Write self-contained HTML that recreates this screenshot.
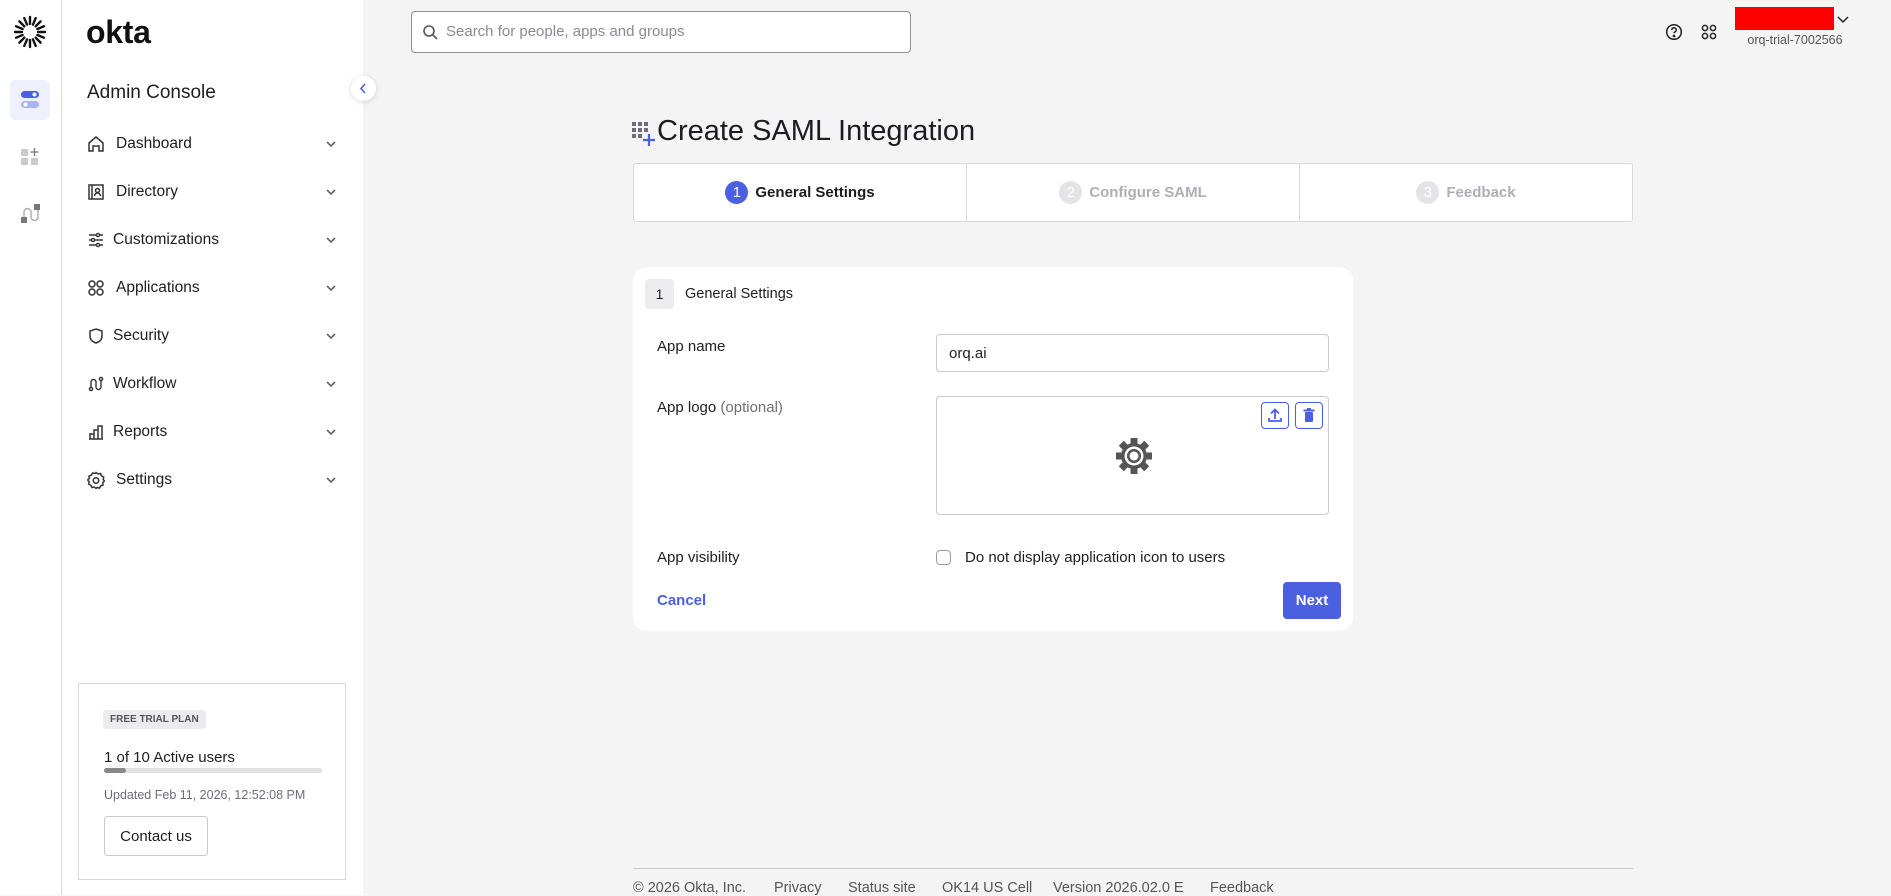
<!DOCTYPE html>
<html><head><meta charset="utf-8"><style>
*{box-sizing:border-box;margin:0;padding:0}
body{width:1891px;height:895px;overflow:hidden;background:#f4f4f4;font-family:"Liberation Sans",sans-serif;color:#1d1d21;position:relative;font-size:15px}
.abs{position:absolute}
.rail{left:0;top:0;width:62px;height:895px;background:#fff;border-right:1px solid #e1e1e1}
.side{left:63px;top:0;width:300px;height:895px;background:#fff}
.nav{position:absolute;left:0;width:300px;height:30px;display:flex;align-items:center;font-size:15.5px;color:#1d1d21}
.nav svg.ic{position:absolute;left:24px}
.nav span{position:absolute;left:53px}
.nav svg.ch{position:absolute;left:261px}
.steps{left:633px;top:163px;width:1000px;height:59px;background:#fff;border:1px solid #d7d7dc;border-radius:3px;display:flex}
.step{flex:1;display:flex;align-items:center;justify-content:center;font-size:15px;font-weight:bold;color:#aeaeb5;border-right:1px solid #d7d7dc}
.step:last-child{border-right:none}
.num{width:23px;height:23px;border-radius:50%;background:#e4e4e7;color:#fff;font-weight:normal;display:inline-flex;align-items:center;justify-content:center;margin-right:7px;font-size:15px}
.card{left:633px;top:267px;width:720px;height:364px;background:#fff;border-radius:14px}
.lbl{font-size:15px;color:#1d1d21}
.ft{top:880px;font-size:14.5px;color:#555;white-space:nowrap}
</style></head><body>
<div class="abs rail">
 <svg class="abs" style="left:13px;top:15px" width="34" height="34" viewBox="-17 -17 34 34">
  <g stroke="#111" stroke-width="2.4" stroke-linecap="round">
   <line x1="0" y1="-8" x2="0" y2="-15"/><line x1="0" y1="8" x2="0" y2="15"/><line x1="-8" y1="0" x2="-15" y2="0"/><line x1="8" y1="0" x2="15" y2="0"/>
   <line x1="5.7" y1="-5.7" x2="10.6" y2="-10.6"/><line x1="-5.7" y1="5.7" x2="-10.6" y2="10.6"/><line x1="-5.7" y1="-5.7" x2="-10.6" y2="-10.6"/><line x1="5.7" y1="5.7" x2="10.6" y2="10.6"/>
   <line x1="3" y1="-7.4" x2="5.7" y2="-13.9"/><line x1="-3" y1="7.4" x2="-5.7" y2="13.9"/><line x1="-3" y1="-7.4" x2="-5.7" y2="-13.9"/><line x1="3" y1="7.4" x2="5.7" y2="13.9"/>
   <line x1="7.4" y1="-3" x2="13.9" y2="-5.7"/><line x1="-7.4" y1="3" x2="-13.9" y2="5.7"/><line x1="-7.4" y1="-3" x2="-13.9" y2="-5.7"/><line x1="7.4" y1="3" x2="13.9" y2="5.7"/>
  </g></svg>
 <div class="abs" style="left:10px;top:80px;width:40px;height:40px;background:#eef0fd;border-radius:5px"></div>
 <svg class="abs" style="left:20px;top:90px" width="20" height="20"><rect x="1" y="1" width="18" height="7" rx="3.5" fill="#4b5fe1"/><circle cx="14.5" cy="4.5" r="2" fill="#fff"/><rect x="1" y="11" width="18" height="7" rx="3.5" fill="#a9b4f2"/><circle cx="5.5" cy="14.5" r="2" fill="#fff"/></svg>
 <svg class="abs" style="left:20px;top:147px" width="20" height="20"><rect x="1" y="2" width="7" height="7" rx="1" fill="#c9c9ce"/><rect x="1" y="11" width="7" height="7" rx="1" fill="#c9c9ce"/><rect x="11" y="11" width="7" height="7" rx="1" fill="#c9c9ce"/><path d="M14.5 1v8M10.5 5h8" stroke="#888" stroke-width="1.6"/></svg>
 <svg class="abs" style="left:20px;top:203px" width="22" height="22"><rect x="1" y="14" width="6" height="6" fill="#777"/><rect x="14" y="1" width="6" height="6" fill="#777"/><path d="M4 14V9a3.5 3.5 0 0 1 7 0v5a3.5 3.5 0 0 0 7 0V7" fill="none" stroke="#aaa" stroke-width="1.4"/></svg>
</div>
<div class="abs side">
 <div class="abs" style="left:23px;top:14px;font-size:32px;font-weight:bold;letter-spacing:-0.3px;color:#111">okta</div>
 <div class="abs" style="left:24px;top:82px;font-size:19px">Admin Console</div>
 <div class="nav" style="top:129px"><svg class="ic" width="18" height="18" fill="none" stroke="#333" stroke-width="1.5"><path d="M2 16V8l7-6 7 6v8h-4v-5H6v5z"/></svg><span>Dashboard</span><svg class="ch" width="14" height="14" fill="none" stroke="#555" stroke-width="1.5"><path d="M3 5l4 4 4-4"/></svg></div>
 <div class="nav" style="top:177px"><svg class="ic" width="18" height="18" fill="none" stroke="#333" stroke-width="1.5"><rect x="2" y="2" width="14" height="14"/><path d="M5 2v14"/><circle cx="10.5" cy="7.5" r="2"/><path d="M7.5 13a3 3 0 0 1 6 0"/></svg><span>Directory</span><svg class="ch" width="14" height="14" fill="none" stroke="#555" stroke-width="1.5"><path d="M3 5l4 4 4-4"/></svg></div>
 <div class="nav" style="top:225px"><svg class="ic" width="18" height="18" fill="none" stroke="#333" stroke-width="1.4"><path d="M2 4h14M2 9h14M2 14h14"/><circle cx="11" cy="4" r="1.6" fill="#fff"/><circle cx="6" cy="9" r="1.6" fill="#fff"/><circle cx="11" cy="14" r="1.6" fill="#fff"/></svg><span style="left:50px">Customizations</span><svg class="ch" width="14" height="14" fill="none" stroke="#555" stroke-width="1.5"><path d="M3 5l4 4 4-4"/></svg></div>
 <div class="nav" style="top:273px"><svg class="ic" width="18" height="18" fill="none" stroke="#333" stroke-width="1.5"><circle cx="5" cy="5" r="3"/><circle cx="13" cy="5" r="3"/><circle cx="5" cy="13" r="3"/><circle cx="13" cy="13" r="3"/></svg><span>Applications</span><svg class="ch" width="14" height="14" fill="none" stroke="#555" stroke-width="1.5"><path d="M3 5l4 4 4-4"/></svg></div>
 <div class="nav" style="top:321px"><svg class="ic" width="18" height="18" fill="none" stroke="#333" stroke-width="1.5"><path d="M9 2l6 2v5c0 4-3 6-6 7-3-1-6-3-6-7V4z"/></svg><span style="left:50px">Security</span><svg class="ch" width="14" height="14" fill="none" stroke="#555" stroke-width="1.5"><path d="M3 5l4 4 4-4"/></svg></div>
 <div class="nav" style="top:369px"><svg class="ic" width="18" height="18" fill="none" stroke="#333" stroke-width="1.4"><circle cx="4" cy="14" r="1.6"/><circle cx="14" cy="4" r="1.6"/><path d="M4 12V7a2.5 2.5 0 0 1 5 0v5a2.5 2.5 0 0 0 5 0V6"/></svg><span style="left:50px">Workflow</span><svg class="ch" width="14" height="14" fill="none" stroke="#555" stroke-width="1.5"><path d="M3 5l4 4 4-4"/></svg></div>
 <div class="nav" style="top:417px"><svg class="ic" width="18" height="18" fill="none" stroke="#333" stroke-width="1.5"><path d="M2 16h14M3 16v-5h4v5M7 16V7h4v9M11 16V3h4v13"/></svg><span style="left:50px">Reports</span><svg class="ch" width="14" height="14" fill="none" stroke="#555" stroke-width="1.5"><path d="M3 5l4 4 4-4"/></svg></div>
 <div class="nav" style="top:465px"><svg class="ic" width="18" height="18" fill="none" stroke="#333" stroke-width="1.5"><path d="M9 1.5l2 1.5 2.5-.5 1 2.3 2.2 1.2-.5 2.5L17.5 10l-1.8 1.6.3 2.5-2.3.8-1.2 2.2-2.5-.6L9 17.5 7.4 16l-2.5.5-1-2.3-2.2-1.2.5-2.5L.5 9l1.8-1.6L2 5l2.3-.8L5.5 2l2.5.6z"/><circle cx="9" cy="9.5" r="2.7"/></svg><span>Settings</span><svg class="ch" width="14" height="14" fill="none" stroke="#555" stroke-width="1.5"><path d="M3 5l4 4 4-4"/></svg></div>
 <div class="abs" style="left:15px;top:683px;width:268px;height:197px;border:1px solid #d7d7dc">
  <div class="abs" style="left:24px;top:26px;background:#ececee;border-radius:3px;padding:4px 7px;font-size:10px;font-weight:bold;color:#555">FREE TRIAL PLAN</div>
  <div class="abs" style="left:25px;top:65px;font-size:15px">1 of 10 Active users</div>
  <div class="abs" style="left:25px;top:84px;width:218px;height:5px;background:#e1e1e4;border-radius:3px"><div style="width:22px;height:5px;background:#888;border-radius:3px"></div></div>
  <div class="abs" style="left:25px;top:104px;font-size:12.5px;color:#6e6e78">Updated Feb 11, 2026, 12:52:08 PM</div>
  <div class="abs" style="left:25px;top:132px;width:104px;height:40px;border:1px solid #c9c9ce;border-radius:4px;display:flex;align-items:center;justify-content:center;font-size:15px">Contact us</div>
 </div>
</div>
<div class="abs" style="left:351px;top:76px;width:25px;height:25px;border-radius:50%;background:#fff;box-shadow:0 1px 6px rgba(0,0,0,.15)"><svg width="25" height="25" fill="none" stroke="#4b5fe1" stroke-width="1.6"><path d="M14 8l-4 4.5 4 4.5"/></svg></div>

<div class="abs" style="left:411px;top:11px;width:500px;height:42px;background:#fff;border:1px solid #8f8f96;border-radius:4px">
 <svg class="abs" style="left:10px;top:12px" width="17" height="17" fill="none" stroke="#555" stroke-width="1.6"><circle cx="7" cy="7" r="5"/><path d="M11 11l4 4"/></svg>
 <div class="abs" style="left:34px;top:11px;font-size:15px;color:#8a8a93">Search for people, apps and groups</div>
</div>
<svg class="abs" style="left:1665px;top:23px" width="18" height="18" fill="none" stroke="#222" stroke-width="1.5"><circle cx="9" cy="9" r="7.3"/><path d="M6.8 7a2.2 2.2 0 1 1 3 2c-.6.3-.8.7-.8 1.3"/><circle cx="9" cy="13" r=".6" fill="#222"/></svg>
<svg class="abs" style="left:1700px;top:23px" width="18" height="18" fill="none" stroke="#222" stroke-width="1.5"><circle cx="5" cy="5" r="2.6"/><circle cx="13" cy="5" r="2.6"/><circle cx="5" cy="13" r="2.6"/><circle cx="13" cy="13" r="2.6"/></svg>
<div class="abs" style="left:1735px;top:7px;width:99px;height:23px;background:#ff0000"></div>
<svg class="abs" style="left:1836px;top:15px" width="14" height="10" fill="none" stroke="#222" stroke-width="1.5"><path d="M2 2l5 5 5-5"/></svg>
<div class="abs" style="left:1735px;top:33px;width:120px;text-align:center;font-size:12.5px;color:#555">orq-trial-7002566</div>

<svg class="abs" style="left:632px;top:122px" width="24" height="25"><g fill="#6e6e78"><rect x="0" y="0" width="4" height="4"/><rect x="6" y="0" width="4" height="4"/><rect x="12" y="0" width="4" height="4"/><rect x="0" y="6" width="4" height="4"/><rect x="6" y="6" width="4" height="4"/><rect x="12" y="6" width="4" height="4"/><rect x="0" y="12" width="4" height="4"/><rect x="6" y="12" width="4" height="4"/></g><path d="M17 12v12M11 18h12" stroke="#4b5fe1" stroke-width="2.2"/></svg>
<div class="abs" style="left:657px;top:115px;font-size:29px;color:#1d1d21">Create SAML Integration</div>

<div class="abs steps">
 <div class="step" style="color:#1d1d21"><span class="num" style="background:#4b5fe1">1</span>General Settings</div>
 <div class="step"><span class="num">2</span>Configure SAML</div>
 <div class="step"><span class="num">3</span>Feedback</div>
</div>

<div class="abs card">
 <div class="abs" style="left:12px;top:12px;width:29px;height:30px;background:#ececee;border-radius:4px;display:flex;align-items:center;justify-content:center;font-size:14px">1</div>
 <div class="abs" style="left:52px;top:19px;font-size:14.5px">General Settings</div>
 <div class="abs lbl" style="left:24px;top:71px">App name</div>
 <div class="abs" style="left:303px;top:67px;width:393px;height:38px;border:1px solid #c9c9ce;border-radius:4px;padding:10px 12px;font-size:15px">orq.ai</div>
 <div class="abs lbl" style="left:24px;top:132px">App logo <span style="color:#6e6e78">(optional)</span></div>
 <div class="abs" style="left:303px;top:129px;width:393px;height:119px;border:1px solid #c9c9ce;border-radius:4px">
  <div class="abs" style="left:324px;top:5px;width:28px;height:27px;border:1.5px solid #4b5fe1;border-radius:4px"><svg width="26" height="25" fill="none" stroke="#4b5fe1" stroke-width="1.8"><path d="M13 16V7M9 10.5l4-4 4 4M7 15v3h12v-3"/></svg></div>
  <div class="abs" style="left:358px;top:5px;width:28px;height:27px;border:1.5px solid #4b5fe1;border-radius:4px"><svg width="26" height="25"><rect x="9" y="9" width="8" height="10" rx="1" fill="#4b5fe1"/><rect x="7.5" y="6.5" width="11" height="2" fill="#4b5fe1"/><rect x="11" y="5" width="4" height="2" fill="#4b5fe1"/></svg></div>
  <svg class="abs" style="left:178px;top:40px" width="38" height="38" viewBox="-19 -19 38 38"><g fill="#555"><circle r="13"/><g id="t"><rect x="-3.5" y="-18" width="7" height="8"/></g><use href="#t" transform="rotate(45)"/><use href="#t" transform="rotate(90)"/><use href="#t" transform="rotate(135)"/><use href="#t" transform="rotate(180)"/><use href="#t" transform="rotate(225)"/><use href="#t" transform="rotate(270)"/><use href="#t" transform="rotate(315)"/></g><circle r="9.5" fill="#fff"/><circle r="7" fill="#555"/><circle r="4.5" fill="#fff"/></svg>
 </div>
 <div class="abs lbl" style="left:24px;top:282px">App visibility</div>
 <div class="abs" style="left:303px;top:283px;width:15px;height:15px;border:1.5px solid #9c9ca3;border-radius:4px"></div>
 <div class="abs lbl" style="left:332px;top:282px">Do not display application icon to users</div>
 <div class="abs" style="left:24px;top:325px;font-size:15px;font-weight:bold;color:#4b5fe1">Cancel</div>
 <div class="abs" style="left:650px;top:315px;width:58px;height:37px;background:#4b5fe1;border-radius:4px;color:#fff;font-weight:bold;font-size:15px;display:flex;align-items:center;justify-content:center">Next</div>
</div>

<div class="abs" style="left:633px;top:868px;width:1000px;height:1px;background:#c9c9ce"></div>
<div class="abs ft" style="left:633px">© 2026 Okta, Inc.</div>
<div class="abs ft" style="left:774px">Privacy</div>
<div class="abs ft" style="left:848px">Status site</div>
<div class="abs ft" style="left:942px">OK14 US Cell</div>
<div class="abs ft" style="left:1053px">Version 2026.02.0 E</div>
<div class="abs ft" style="left:1210px">Feedback</div>
</body></html>
